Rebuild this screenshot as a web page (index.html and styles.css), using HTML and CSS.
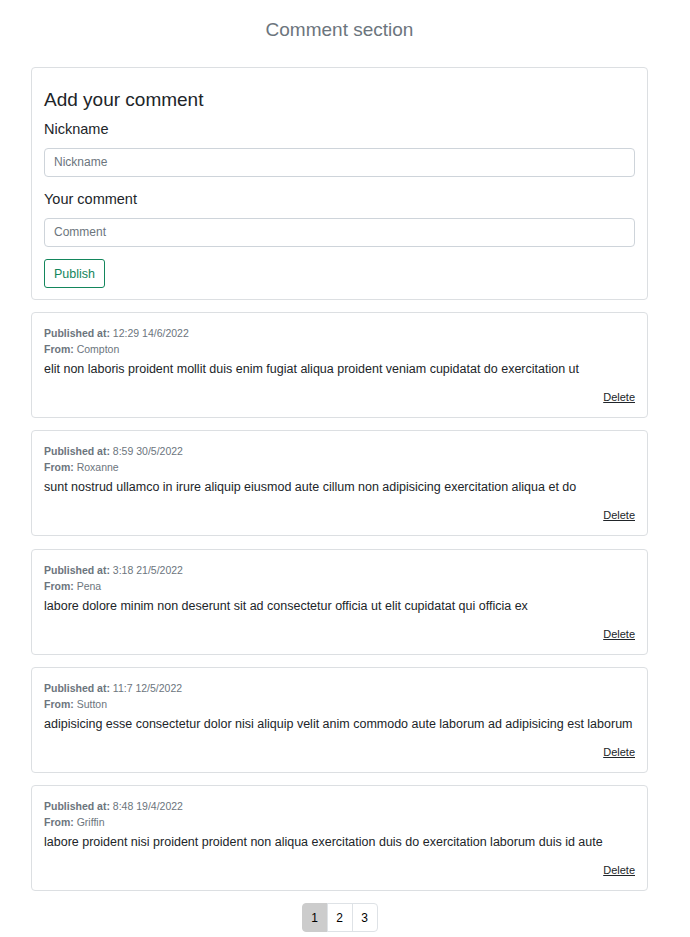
FILE: index.html
```html
<!DOCTYPE html>
<html>
<head>
<meta charset="utf-8">
<link rel="stylesheet" href="styles.css">
</head>
<body>
<div class="page">
  <h1 class="title">Comment section</h1>
  <div class="card form-card">
    <h2 class="form-title">Add your comment</h2>
    <label class="label">Nickname</label>
    <div class="input">Nickname</div>
    <label class="label">Your comment</label>
    <div class="input">Comment</div>
    <button class="btn">Publish</button>
  </div>
  <div class="list">
    <div class="card comment">
      <div class="meta"><b>Published at:</b> 12:29 14/6/2022</div>
      <div class="meta"><b>From:</b> Compton</div>
      <div class="text">elit non laboris proident mollit duis enim fugiat aliqua proident veniam cupidatat do exercitation ut</div>
      <div class="actions"><a class="del">Delete</a></div>
    </div>
    <div class="card comment">
      <div class="meta"><b>Published at:</b> 8:59 30/5/2022</div>
      <div class="meta"><b>From:</b> Roxanne</div>
      <div class="text">sunt nostrud ullamco in irure aliquip eiusmod aute cillum non adipisicing exercitation aliqua et do</div>
      <div class="actions"><a class="del">Delete</a></div>
    </div>
    <div class="card comment">
      <div class="meta"><b>Published at:</b> 3:18 21/5/2022</div>
      <div class="meta"><b>From:</b> Pena</div>
      <div class="text">labore dolore minim non deserunt sit ad consectetur officia ut elit cupidatat qui officia ex</div>
      <div class="actions"><a class="del">Delete</a></div>
    </div>
    <div class="card comment">
      <div class="meta"><b>Published at:</b> 11:7 12/5/2022</div>
      <div class="meta"><b>From:</b> Sutton</div>
      <div class="text">adipisicing esse consectetur dolor nisi aliquip velit anim commodo aute laborum ad adipisicing est laborum</div>
      <div class="actions"><a class="del">Delete</a></div>
    </div>
    <div class="card comment">
      <div class="meta"><b>Published at:</b> 8:48 19/4/2022</div>
      <div class="meta"><b>From:</b> Griffin</div>
      <div class="text">labore proident nisi proident proident non aliqua exercitation duis do exercitation laborum duis id aute</div>
      <div class="actions"><a class="del">Delete</a></div>
    </div>
  </div>
  <div class="pager">
    <span class="pg active">1</span><span class="pg">2</span><span class="pg">3</span>
  </div>
</div>
</body>
</html>
```
FILE: styles.css
```css
* { box-sizing: border-box; }
body {
  margin: 0;
  font-family: "Liberation Sans", Arial, sans-serif;
  color: #212529;
  background: #fff;
}
.page {
  width: 617px;
  margin-left: 31px;
  padding-top: 17px;
  display: flex;
  flex-direction: column;
}
.title {
  margin: 0 0 25px;
  font-size: 19px;
  font-weight: 400;
  color: #6c757d;
  text-align: center;
  line-height: 25px;
}
.card {
  border: 1px solid #dcdfe2;
  border-radius: 4px;
  background: #fff;
}
.form-card {
  padding: 20px 12px 11px;
  display: flex;
  flex-direction: column;
  align-items: flex-start;
}
.form-title {
  margin: 0 0 7px;
  font-size: 19px;
  font-weight: 400;
  line-height: 24px;
  color: #212529;
}
.label {
  font-size: 14.5px;
  line-height: 20px;
  margin-bottom: 9px;
}
.input {
  width: 100%;
  height: 29px;
  border: 1px solid #ced4da;
  border-radius: 4px;
  padding: 0 9px;
  font-size: 12px;
  line-height: 27px;
  color: #6c757d;
  margin-bottom: 11px;
}
.input + .label { margin-top: 1px; }
.input + .label + .input { margin-bottom: 12px; }
.btn {
  height: 29px;
  padding: 0 9px;
  border: 1px solid #13865c;
  border-radius: 3px;
  background: #fff;
  color: #13865c;
  font-family: inherit;
  font-size: 12.5px;
}
.list {
  margin-top: 12px;
  display: flex;
  flex-direction: column;
  gap: 12.25px;
}
.comment {
  height: 106px;
  padding: 12px 12px 0;
  display: flex;
  flex-direction: column;
}
.meta {
  font-size: 10.5px;
  line-height: 16px;
  color: #6c757d;
}
.meta b { font-weight: 700; }
.text {
  margin-top: 3px;
  font-size: 12.5px;
  line-height: 18px;
  color: #212529;
}
.actions {
  margin-top: 12px;
  display: flex;
  justify-content: flex-end;
}
.del {
  font-size: 11px;
  line-height: 14px;
  color: #212529;
  text-decoration: underline;
}
.pager {
  margin-top: 12px;
  display: flex;
  justify-content: center;
}
.pg {
  width: 26px;
  height: 29px;
  display: flex;
  align-items: center;
  justify-content: center;
  border: 1px solid #dee2e6;
  margin-left: -1px;
  font-size: 12px;
  color: #000;
}
.pg:first-child { border-radius: 4px 0 0 4px; margin-left: 0; }
.pg:last-child { border-radius: 0 4px 4px 0; }
.pg.active { background: #cccccc; border-color: #cccccc; }
```
